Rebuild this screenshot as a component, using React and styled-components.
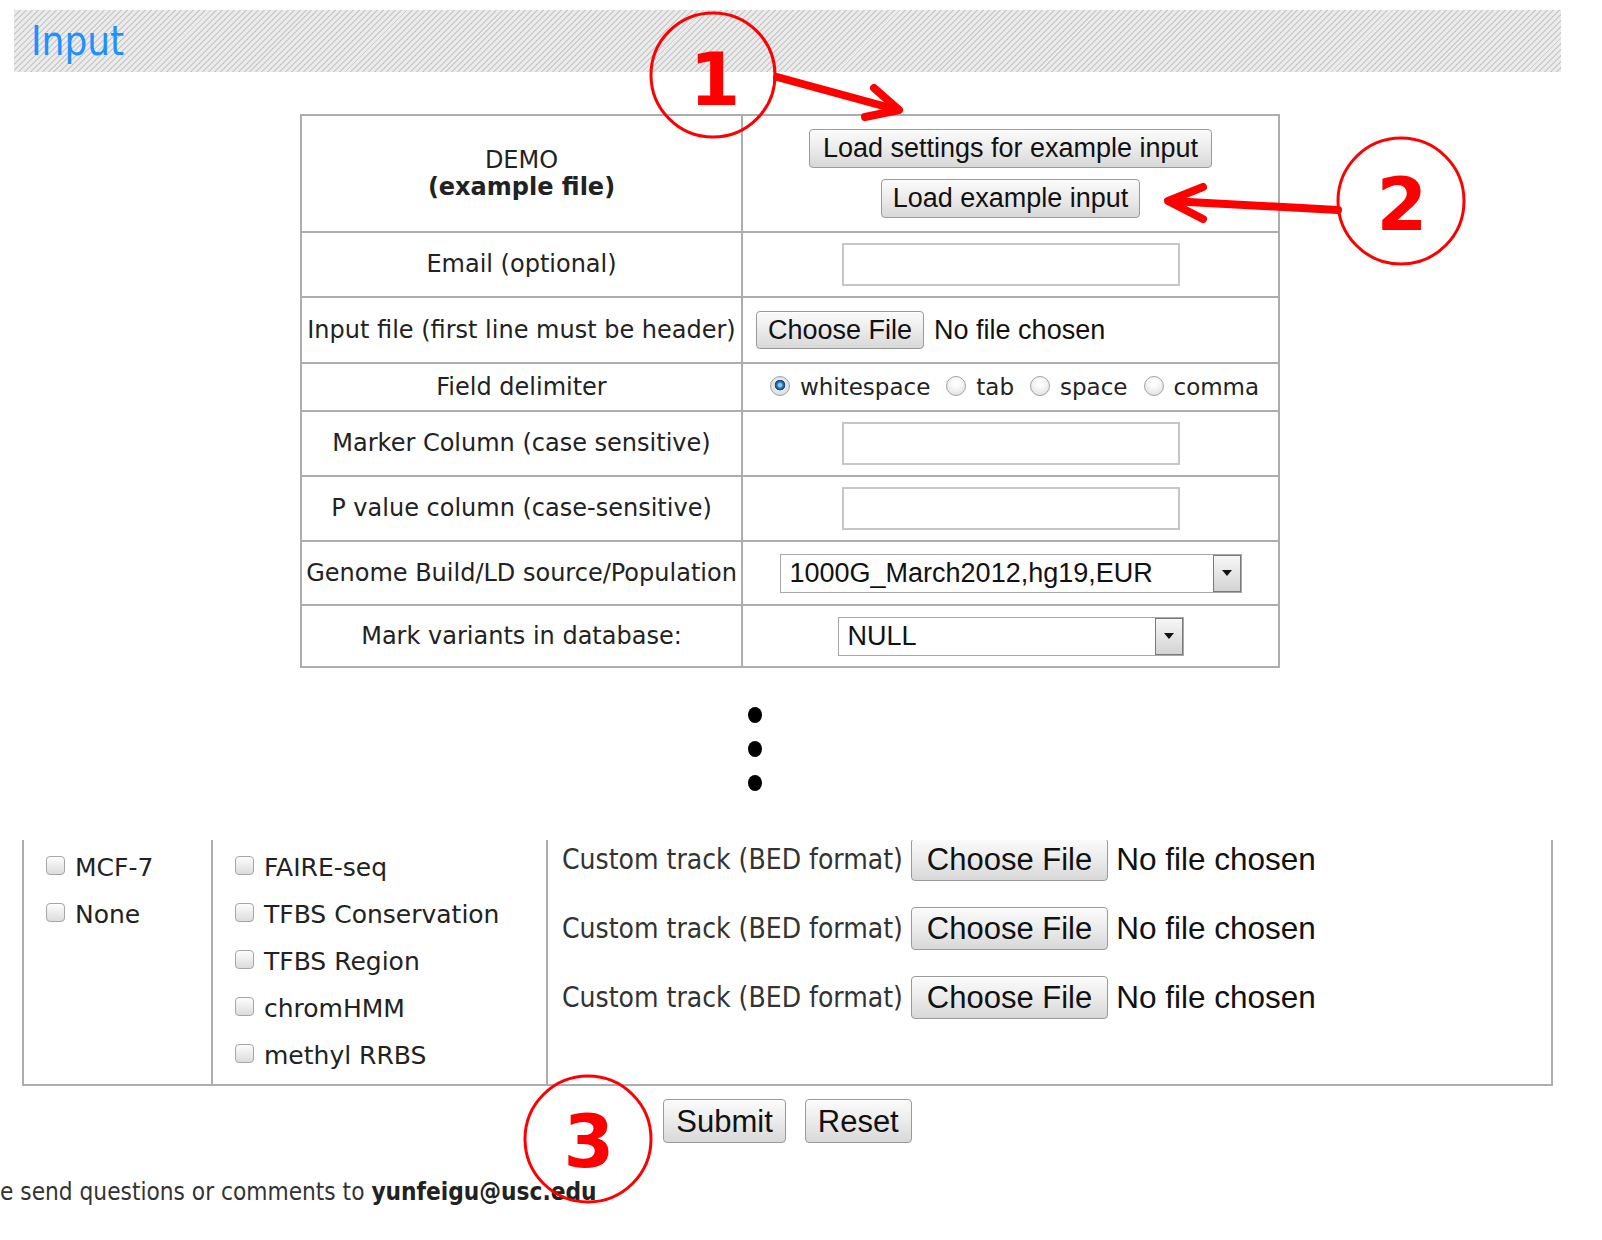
import React from 'react';
import styled, { createGlobalStyle } from 'styled-components';

const GlobalStyle = createGlobalStyle`
  html, body {
    margin: 0;
    padding: 0;
    background: #fff;
  }
  body {
    font-family: 'DejaVu Sans', Verdana, sans-serif;
    color: #222;
  }
`;

const delimiters = [
  { label: 'whitespace', checked: true },
  { label: 'tab' },
  { label: 'space' },
  { label: 'comma' },
];

const cellLines = ['MCF-7', 'None'];
const annotations = ['FAIRE-seq', 'TFBS Conservation', 'TFBS Region', 'chromHMM', 'methyl RRBS'];

const App = () => {
  return (
    <>
      <GlobalStyle />
      <Page>
        <SectionBar>
          <SectionTitle>Input</SectionTitle>
        </SectionBar>

        <FormTable>
          <colgroup>
            <col style={{ width: 441 }} />
            <col style={{ width: 537 }} />
          </colgroup>
          <tbody>
            <Row $h={117}>
              <LabelCell>
                DEMO
                <br />
                <strong>(example file)</strong>
              </LabelCell>
              <ValueCell>
                <ButtonStack>
                  <LegacyButton $px={13}>Load settings for example input</LegacyButton>
                  <LegacyButton $px={11}>Load example input</LegacyButton>
                </ButtonStack>
              </ValueCell>
            </Row>
            <Row $h={65}>
              <LabelCell>Email (optional)</LabelCell>
              <ValueCell>
                <TextField type="text" />
              </ValueCell>
            </Row>
            <Row $h={66}>
              <LabelCell>Input file (first line must be header)</LabelCell>
              <ValueCell $align="left" $pad={13}>
                <FileRow>
                  <LegacyButton $h={38} $px={11}>Choose File</LegacyButton>
                  <FileName>No file chosen</FileName>
                </FileRow>
              </ValueCell>
            </Row>
            <Row $h={48}>
              <LabelCell>Field delimiter</LabelCell>
              <ValueCell>
                <RadioGroup>
                  {delimiters.map((d) => (
                    <RadioOption key={d.label}>
                      <RadioDot $checked={d.checked} />
                      {d.label}
                    </RadioOption>
                  ))}
                </RadioGroup>
              </ValueCell>
            </Row>
            <Row $h={65}>
              <LabelCell>Marker Column (case sensitive)</LabelCell>
              <ValueCell>
                <TextField type="text" />
              </ValueCell>
            </Row>
            <Row $h={65}>
              <LabelCell>P value column (case-sensitive)</LabelCell>
              <ValueCell>
                <TextField type="text" />
              </ValueCell>
            </Row>
            <Row $h={64}>
              <LabelCell>Genome Build/LD source/Population</LabelCell>
              <ValueCell>
                <SelectBox $w={462}>
                  <SelectValue>1000G_March2012,hg19,EUR</SelectValue>
                  <SelectArrow />
                </SelectBox>
              </ValueCell>
            </Row>
            <Row $h={62}>
              <LabelCell>Mark variants in database:</LabelCell>
              <ValueCell>
                <SelectBox $w={346}>
                  <SelectValue>NULL</SelectValue>
                  <SelectArrow />
                </SelectBox>
              </ValueCell>
            </Row>
          </tbody>
        </FormTable>

        <Ellipsis>
          <Dot />
          <Dot />
          <Dot />
        </Ellipsis>

        <TrackPanel>
          <PanelColumn>
            <CheckList>
              {cellLines.map((c) => (
                <CheckRow key={c}>
                  <CheckBox />
                  {c}
                </CheckRow>
              ))}
            </CheckList>
          </PanelColumn>
          <PanelColumn>
            <CheckList>
              {annotations.map((a) => (
                <CheckRow key={a}>
                  <CheckBox />
                  {a}
                </CheckRow>
              ))}
            </CheckList>
          </PanelColumn>
          <PanelColumn $last>
            <TrackList>
              {[0, 1, 2].map((i) => (
                <TrackRow key={i}>
                  <TrackLabel>Custom track (BED format)</TrackLabel>
                  <LegacyButton $size={31} $h={43} $px={15}>
                    Choose File
                  </LegacyButton>
                  <FileName $size={31.5}>No file chosen</FileName>
                </TrackRow>
              ))}
            </TrackList>
          </PanelColumn>
        </TrackPanel>

        <ActionRow>
          <LegacyButton $size={31} $h={44} $px={12}>
            Submit
          </LegacyButton>
          <LegacyButton $size={31} $h={44} $px={12}>
            Reset
          </LegacyButton>
        </ActionRow>

        <Footer>
          e send questions or comments to <strong>yunfeigu@usc.edu</strong>
        </Footer>

        {/* red callouts drawn over the screenshot */}
        <Overlay width="1602" height="1240" viewBox="0 0 1602 1240">
          <g fill="none" stroke="#ff0000" strokeLinecap="round" strokeLinejoin="round">
            <ellipse cx="713" cy="75" rx="62" ry="62" strokeWidth="3" />
            <ellipse cx="1401" cy="201" rx="63" ry="63" strokeWidth="3" />
            <ellipse cx="588" cy="1139" rx="63" ry="63" strokeWidth="3" />
            <path d="M777 77 L898 110" strokeWidth="8" />
            <path d="M874 88 L899 110 L865 117" strokeWidth="8" />
            <path d="M1338 210 L1170 201" strokeWidth="8" />
            <path d="M1203 187 L1168 201 L1203 219" strokeWidth="8" />
          </g>
          <g fill="#ff0000" fontFamily="'DejaVu Sans', sans-serif" fontWeight="bold" fontSize="73" textAnchor="middle">
            <text x="715" y="105">1</text>
            <text x="1402" y="230">2</text>
            <text x="589" y="1167">3</text>
          </g>
        </Overlay>
      </Page>
    </>
  );
};

export default App;

const Page = styled.div`
  position: relative;
  width: 1602px;
  height: 1240px;
  overflow: hidden;
  padding-top: 10px;
  box-sizing: border-box;
`;

const SectionBar = styled.div`
  margin: 0 41px 0 14px;
  height: 62px;
  padding-left: 17px;
  display: flex;
  align-items: center;
  background: repeating-linear-gradient(135deg, #cdcdcd 0 1.4px, #ebebeb 1.4px 4.2px);
`;

const SectionTitle = styled.h2`
  margin: 0;
  font-family: 'DejaVu Sans Condensed', 'DejaVu Sans', sans-serif;
  font-weight: normal;
  font-size: 40px;
  line-height: 62px;
  color: #1e90ff;
`;

const FormTable = styled.table`
  margin: 42px 0 0 300px;
  width: 978px;
  table-layout: fixed;
  border-collapse: collapse;
  border: 2px solid #adadad;
`;

const Row = styled.tr`
  height: ${(p) => p.$h}px;
`;

const LabelCell = styled.td`
  border: 2px solid #adadad;
  padding: 0;
  text-align: center;
  font-size: 24px;
  line-height: 27px;
  color: #222;
  white-space: nowrap;
`;

const ValueCell = styled.td`
  border: 2px solid #adadad;
  padding: 0 ${(p) => p.$pad || 0}px;
  text-align: ${(p) => p.$align || 'center'};
`;

const ButtonStack = styled.div`
  display: flex;
  flex-direction: column;
  align-items: center;
  gap: 11px;
`;

const LegacyButton = styled.button`
  height: ${(p) => p.$h || 39}px;
  padding: 0 ${(p) => p.$px || 10}px;
  font-family: 'Liberation Sans', Arial, sans-serif;
  font-size: ${(p) => p.$size || 27}px;
  line-height: 1;
  color: #111;
  border: 1px solid #9a9a9a;
  border-radius: 4px;
  background: linear-gradient(#fbfbfb, #ededed 45%, #d8d8d8);
  box-shadow: inset 0 1px 0 #fff;
  white-space: nowrap;
  cursor: pointer;
`;

const TextField = styled.input`
  display: block;
  margin: 0 auto;
  width: 338px;
  height: 43px;
  box-sizing: border-box;
  border: 2px solid #c6c6c6;
  background: #fff;
  outline: none;
`;

const FileRow = styled.div`
  display: flex;
  align-items: center;
  gap: 10px;
`;

const FileName = styled.span`
  font-family: 'Liberation Sans', Arial, sans-serif;
  font-size: ${(p) => p.$size || 27}px;
  color: #111;
  white-space: nowrap;
`;

const RadioGroup = styled.div`
  display: flex;
  justify-content: center;
  align-items: center;
  gap: 16px;
  padding-left: 8px;
  font-size: 23px;
  color: #222;
`;

const RadioOption = styled.label`
  display: flex;
  align-items: center;
  gap: 10px;
`;

const RadioDot = styled.span`
  width: 20px;
  height: 20px;
  margin-top: -2px;
  box-sizing: border-box;
  border-radius: 50%;
  border: 1px solid #a3a3a3;
  background: ${(p) =>
    p.$checked
      ? 'radial-gradient(circle at 50% 45%, #8ccaf2 0 1.5px, #2d78b8 3px, #10467a 5px, #e9e9e9 5.6px, #d2d2d2 100%)'
      : 'radial-gradient(circle at 50% 35%, #fdfdfd 0 3px, #dadada 100%)'};
`;

const SelectBox = styled.div`
  display: inline-flex;
  width: ${(p) => p.$w}px;
  height: 39px;
  box-sizing: border-box;
  border: 1px solid #a8a8a8;
  background: #fff;
  vertical-align: middle;
`;

const SelectValue = styled.span`
  flex: 1;
  padding-left: 9px;
  text-align: left;
  font-family: 'Liberation Sans', Arial, sans-serif;
  font-size: 27px;
  line-height: 37px;
  color: #111;
`;

const SelectArrow = styled.span`
  width: 28px;
  box-sizing: border-box;
  border: 1px solid #7a7a7a;
  background: linear-gradient(#f7f7f7, #d3d3d3);
  display: flex;
  align-items: center;
  justify-content: center;

  &::after {
    content: '';
    border-left: 5px solid transparent;
    border-right: 5px solid transparent;
    border-top: 6px solid #111;
  }
`;

const Ellipsis = styled.div`
  display: flex;
  flex-direction: column;
  gap: 18px;
  margin-top: 39px;
  padding-left: 748px;
`;

const Dot = styled.span`
  width: 14px;
  height: 16px;
  border-radius: 50%;
  background: #000;
`;

const TrackPanel = styled.div`
  display: grid;
  grid-template-columns: 189px 335px 1fr;
  margin: 49px 0 0 22px;
  width: 1531px;
  height: 246px;
  box-sizing: border-box;
  border: 2px solid #adadad;
  border-top: none;
`;

const PanelColumn = styled.div`
  overflow: hidden;
  border-right: ${(p) => (p.$last ? 'none' : '2px solid #adadad')};
`;

const CheckList = styled.div`
  display: flex;
  flex-direction: column;
  padding: 4px 0 0 22px;
`;

const CheckRow = styled.label`
  display: flex;
  align-items: center;
  gap: 10px;
  height: 47px;
  font-size: 25px;
  color: #222;
  white-space: nowrap;
`;

const CheckBox = styled.span`
  width: 19px;
  height: 19px;
  margin-top: -5px;
  box-sizing: border-box;
  border: 1px solid #a6a6a6;
  border-radius: 4px;
  background: linear-gradient(#fdfdfd, #dcdcdc);
`;

const TrackList = styled.div`
  display: flex;
  flex-direction: column;
  margin-top: -15px;
  padding-left: 14px;
`;

const TrackRow = styled.div`
  display: flex;
  align-items: center;
  height: 69px;
  gap: 8px;
`;

const TrackLabel = styled.span`
  font-family: 'DejaVu Sans Condensed', 'DejaVu Sans', sans-serif;
  font-size: 28px;
  color: #333;
  white-space: nowrap;
`;

const ActionRow = styled.div`
  display: flex;
  justify-content: center;
  gap: 19px;
  margin: 13px 0 0 22px;
  width: 1531px;
`;

const Footer = styled.p`
  margin: 34px 0 0;
  font-family: 'DejaVu Sans Condensed', 'DejaVu Sans', sans-serif;
  font-size: 24.2px;
  line-height: 30px;
  color: #333;
  white-space: nowrap;

  strong {
    color: #222;
  }
`;

const Overlay = styled.svg`
  position: absolute;
  top: 0;
  left: 0;
  pointer-events: none;
`;
